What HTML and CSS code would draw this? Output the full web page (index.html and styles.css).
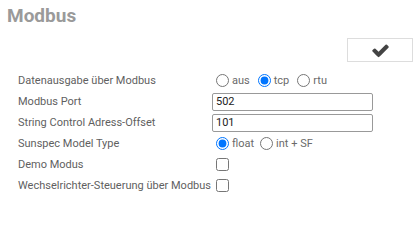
FILE: index.html
```html
<!DOCTYPE html>
<html lang="de">
<head>
  <title>Modbus</title>
  <link rel="stylesheet" href="styles.css">
</head>
<body>

<h2 class="title">Modbus</h2>

<div class="toolbar">
  <button class="save-btn" title="Speichern">
    <svg width="19" height="19" viewBox="0 0 1792 1792"><path d="M1671 566q0 40-28 68l-724 724-136 136q-28 28-68 28t-68-28l-136-136-362-362q-28-28-28-68t28-68l136-136q28-28 68-28t68 28l294 295 656-657q28-28 68-28t68 28l136 136q28 28 28 68z" fill="#444"/></svg>
  </button>
</div>

<div class="form">
  <div class="label">Datenausgabe über Modbus</div>
  <div class="field">
    <label class="opt"><input type="radio" name="mb"> aus</label>
    <label class="opt"><input type="radio" name="mb" checked> tcp</label>
    <label class="opt"><input type="radio" name="mb"> rtu</label>
  </div>

  <div class="label">Modbus Port</div>
  <div class="field"><input class="text" type="text" value="502"></div>

  <div class="label">String Control Adress-Offset</div>
  <div class="field"><input class="text" type="text" value="101"></div>

  <div class="label">Sunspec Model Type</div>
  <div class="field">
    <label class="opt tight"><input type="radio" name="ss" checked>float</label>
    <label class="opt tight"><input type="radio" name="ss">int + SF</label>
  </div>

  <div class="label row-tall">Demo Modus</div>
  <div class="field row-tall"><input type="checkbox"></div>

  <div class="label row-tall">Wechselrichter-Steuerung über Modbus</div>
  <div class="field row-tall"><input type="checkbox"></div>
</div>

</body>
</html>
```

FILE: styles.css
```css
body {
  font-family: Roboto, "Liberation Sans", sans-serif;
  font-size: 11px;
  color: #555;
  background: #fff;
  margin: 0;
  padding: 0;
}

.title {
  margin: 3px 0 0 7px;
  font-size: 19px;
  line-height: 25px;
  font-weight: bold;
  color: #9a9a9a;
}

.toolbar {
  display: flex;
  justify-content: flex-end;
  margin-top: 10px;
  padding-right: 4px;
}

.save-btn {
  width: 66px;
  height: 24px;
  background: #fff;
  border: 1px solid #ddd;
  border-radius: 0;
  display: flex;
  align-items: center;
  justify-content: center;
  padding: 0;
  cursor: pointer;
}

.form {
  display: grid;
  grid-template-columns: 194px 161px;
  grid-auto-rows: 21px;
  align-items: center;
  margin-top: 8px;
  padding-left: 18px;
}

.row-tall {
  height: 22px;
  display: flex;
  align-items: center;
}

.label {
  white-space: nowrap;
  color: #5f5f5f;
}

.field {
  display: flex;
  align-items: center;
}

.opt {
  display: flex;
  align-items: center;
  margin-right: 4px;
  color: #6a6a6a;
}

.opt.tight {
  margin-right: 2px;
}

.opt input {
  margin: 0 3px 0 4px;
}

.text {
  box-sizing: border-box;
  width: 161px;
  height: 18px;
  border: 1px solid #999;
  border-radius: 2px;
  padding: 0 3px;
  font-family: Roboto, "Liberation Sans", sans-serif;
  font-size: 11px;
  color: #222;
}

input[type="checkbox"] {
  margin: 0 0 0 4px;
}
```
